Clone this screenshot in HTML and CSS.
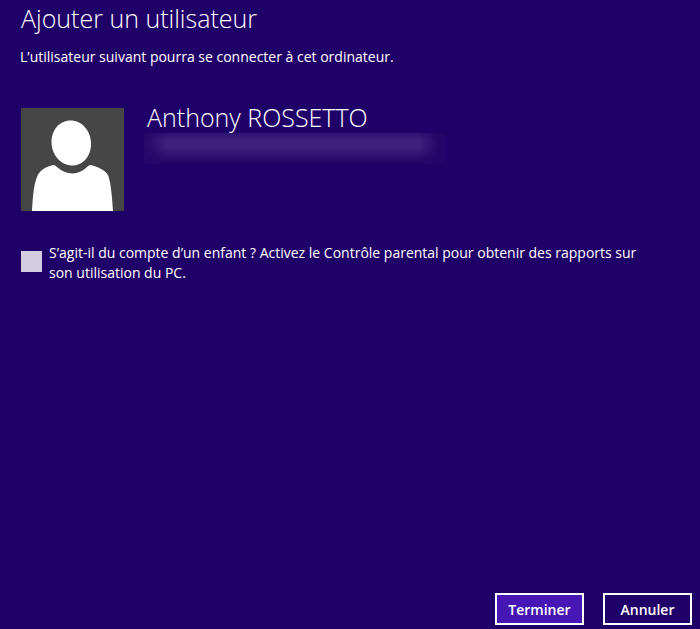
FILE: index.html
```html
<!DOCTYPE html>
<html lang="fr">
<head>
<meta charset="utf-8">
<meta name="viewport" content="width=device-width, initial-scale=1">
<title>Ajouter un utilisateur</title>
<link rel="stylesheet" href="styles.css">
</head>
<body>
<main class="page">
  <h1 class="title">Ajouter un utilisateur</h1>
  <p class="intro">L’utilisateur suivant pourra se connecter à cet ordinateur.</p>
  <section class="account">
    <svg class="avatar" viewBox="0 0 103 103" aria-hidden="true">
      <rect width="103" height="103" fill="#464646"/>
      <path fill="#fff" d="M49.5 12.500C61 12.500 70 23 70 36C70 48 62 57.500 51.500 57.500C40 57.500 30.500 47 30.500 34C30.500 22 38.500 12.500 49.500 12.500Z"/>
      <path fill="#fff" d="M11 103C12 86 13 76 16 69C18 62 26 58.500 32 57Q34 56.700 36 59C45 67.500 58 67.500 66 59Q68 56.700 70 57C76 58.500 84 62 87 67C90 75 91 88 92 103Z"/>
    </svg>
    <div class="identity">
      <h2 class="name">Anthony ROSSETTO</h2>
      <div class="redacted"></div>
    </div>
  </section>
  <label class="child" for="child">
    <input class="box" type="checkbox" id="child">
    <span>S’agit-il du compte d’un enfant ? Activez le Contrôle parental pour obtenir des rapports sur son utilisation du PC.</span>
  </label>
  <footer class="actions">
    <button class="button primary" type="button">Terminer</button>
    <button class="button" type="button">Annuler</button>
  </footer>
</main>
</body>
</html>
```

FILE: styles.css
```css
* {
  box-sizing: border-box;
}

body {
  margin: 0;
  background: #1f0068;
  color: #fff;
  font: 14px/20px "Segoe UI", "Open Sans", sans-serif;
}

.page {
  display: flex;
  flex-direction: column;
  min-height: 100vh;
  padding: 2px 8px 4px 20px;
}

.title,
.name {
  margin: 0;
  font-size: 25px;
  font-weight: 300;
  line-height: 32px;
}

.title {
  padding-left: 1px;
}

.intro {
  margin: 13px 0 0;
}

.account {
  display: flex;
  gap: 20px;
  margin-top: 41px;
  padding-left: 1px;
}

.avatar {
  flex: none;
  width: 103px;
  height: 103px;
}

.identity {
  margin-top: -7px;
}

.name {
  padding-left: 3px;
}

.redacted {
  width: 302px;
  height: 31px;
  background:
    linear-gradient(to right, #240569, transparent 8%, transparent 91%, #230469 98%),
    linear-gradient(to bottom, #2e1273, #3e227d 25%, #3c207b 45%, #2b0e70 80%, #230469);
}

.child {
  display: flex;
  align-items: flex-start;
  gap: 7px;
  margin-top: 32px;
  padding: 0 40px 0 1px;
}

.box {
  appearance: none;
  flex: none;
  width: 21px;
  height: 21px;
  margin: 8px 0 0;
  background: #d2cce0;
}

.box:checked {
  box-shadow: inset 0 0 0 5px #d2cce0;
  background: #4617b4;
}

.actions {
  display: flex;
  justify-content: flex-end;
  gap: 19px;
  margin-top: auto;
}

.button {
  width: 89px;
  height: 32px;
  padding: 1px 0 0;
  border: 2px solid #fff;
  background: transparent;
  color: #fff;
  font: inherit;
  font-weight: 600;
}

.primary {
  background: #4617b4;
}
```
